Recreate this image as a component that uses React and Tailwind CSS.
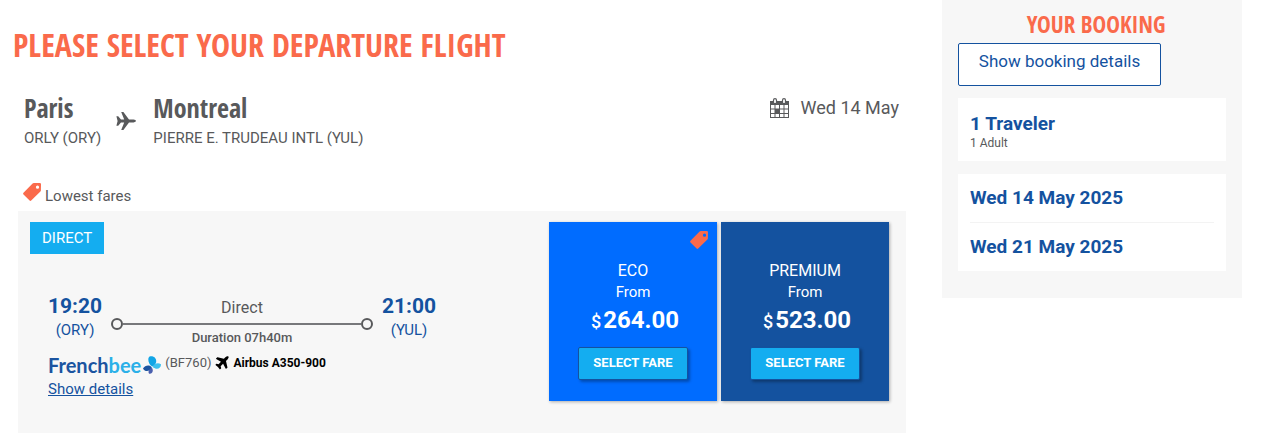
const headingFont = { fontFamily: "'Open Sans Condensed', 'Roboto Condensed', Roboto, sans-serif" };

const fares = [
  { id: "eco", name: "ECO", price: "264.00", lowest: true },
  { id: "premium", name: "PREMIUM", price: "523.00", lowest: false },
];

const bookingDates = ["Wed 14 May 2025", "Wed 21 May 2025"];

function TagIcon({ className }) {
  return (
    <svg viewBox="0 0 18 18" className={className} aria-hidden="true">
      <path
        fill="#fa6a4b"
        fillRule="evenodd"
        d="M9.6 0.6Q10.1 0.1 10.8 0.1L16.8 0Q18 0 18 1.2L17.9 7.2Q17.9 8 17.4 8.5L8.2 17.5Q7.4 18.3 6.6 17.5L0.5 11.4Q-0.3 10.6 0.5 9.8ZM14.5 2.6a1.6 1.6 0 1 0 0 3.2a1.6 1.6 0 1 0 0-3.2Z"
      />
    </svg>
  );
}

function RoutePlaneIcon() {
  return (
    <svg viewBox="0 0 20 18" className="w-5 h-[18px]" aria-hidden="true">
      <path
        fill="#58595b"
        d="M0.4 4.2H2.2L5 7.6H8.2L5.2 0H7.4L13 7.6H17.6Q20 8 20 9T17.6 10.4H13L7.4 18H5.2L8.2 10.4H5L2.2 13.8H0.4L1.6 9Z"
      />
    </svg>
  );
}

function AircraftIcon() {
  return (
    <svg viewBox="150 120 1480 1480" className="w-[14px] h-[14px]" aria-hidden="true">
      <path d="M1568 160q44 52 12 148t-108 172l-161 161 160 696q5 19-12 33l-128 96q-7 6-19 6-4 0-7-1-15-3-21-16l-279-508-259 259 53 194q5 17-8 31l-96 96q-9 9-23 9h-2q-15-2-24-13l-189-252-252-189q-11-7-13-23-1-13 9-25l96-97q9-9 23-9 6 0 8 1l194 53 259-259-508-279q-14-8-17-24-2-16 9-27l128-128q14-13 30-8l665 159 160-160q76-76 172-108t148 12z" />
    </svg>
  );
}

function CalendarIcon() {
  return (
    <svg viewBox="0 0 19 20" className="w-[19px] h-5" aria-hidden="true">
      <path fill="#58595b" d="M0 3h19v17H0z" />
      <path
        fill="#fff"
        d="M1 7h3.5v3.5H1zM5.5 7H9v3.5H5.5zM10 7h3.5v3.5H10zM14.5 7H18v3.5h-3.5zM1 11.5h3.5V15H1zM10 11.5h3.5V15H10zM14.5 11.5H18V15h-3.5zM1 16h3.5v3H1zM5.5 16H9v3H5.5zM10 16h3.5v3H10zM14.5 16H18v3h-3.5z"
      />
      <rect x="3.5" y="0.7" width="3" height="5" rx="1.5" fill="#fff" stroke="#58595b" strokeWidth="1.2" />
      <rect x="12.5" y="0.7" width="3" height="5" rx="1.5" fill="#fff" stroke="#58595b" strokeWidth="1.2" />
    </svg>
  );
}

function AirlineLogo() {
  return (
    <span className="flex items-center" style={{ fontFamily: "Lato, sans-serif" }}>
      <span className="text-xl leading-6 font-bold text-[#1b54a0]">
        French<span className="text-[#2bb0e8]">bee</span>
      </span>
      <svg viewBox="0 0 18 18" className="w-[18px] h-[18px] ml-[2px]" aria-hidden="true">
        <path fill="#12a5e6" d="M9.2 10.6C5.2 8 4.2 1.8 6.6 0.4C11.2-0.8 14 3 13 6.4C12.4 8.4 11 9.8 9.2 10.6Z" />
        <path fill="#3dc0ee" d="M9.6 11C11.4 7.4 14.8 6 18 8.2C18 12.8 13.6 14.2 9.6 11Z" />
        <path fill="#1b54a0" d="M8.8 11.4C6.6 8.4 2 9.2 0 12.4C2 16.2 6.8 15.8 8.8 11.4Z" />
        <path fill="#4a5fae" d="M9 11.8C5.8 13.2 4.6 16 6.2 17.8C9.4 18.2 10.8 15 9 11.8Z" />
      </svg>
    </span>
  );
}

function FareCard({ fare }) {
  return (
    <div
      className={`relative w-[168px] h-[179px] pt-[38px] flex flex-col items-center text-white shadow-[1px_1px_3px_rgba(0,0,0,0.3)] ${
        fare.lowest ? "bg-[#006cff]" : "bg-[#14529f]"
      }`}
    >
      {fare.lowest && <TagIcon className="absolute top-[9px] right-[9px] w-[18px] h-[18px]" />}
      <div className="text-base leading-[22px]">{fare.name}</div>
      <div className="text-[15px] leading-5">From</div>
      <div className="flex items-baseline gap-[2px] font-bold mt-1 pl-1">
        <span className="text-lg leading-7 font-medium">$</span>
        <span className="text-2xl leading-7">{fare.price}</span>
      </div>
      <button
        type="button"
        className="mt-[11px] w-[110px] h-[33px] rounded-[2px] border border-[#14529f] bg-[#14adf0] text-[13px] leading-4 pb-[2px] font-bold shadow-[2px_2px_3px_rgba(0,0,0,0.3)] cursor-pointer"
      >
        SELECT FARE
      </button>
    </div>
  );
}

function FlightTime({ time, airport }) {
  return (
    <div className="w-[54px] text-center text-[#14529f]">
      <div className="text-[21px] leading-6 font-bold">{time}</div>
      <div className="text-[15px] leading-6">{airport}</div>
    </div>
  );
}

function FlightPanel() {
  return (
    <section className="flex justify-between bg-[#f7f7f7] mx-[5px] pt-[11px] pl-3 pr-[17px] pb-8">
      <div>
        <span className="inline-block bg-[#14adf0] text-white text-[15px] leading-8 px-3">
          DIRECT
        </span>
        <div className="ml-[18px] mt-10">
          <div className="flex">
            <FlightTime time="19:20" airport="(ORY)" />
            <div className="w-[262px] mx-[9px] text-center text-[#58595b]">
              <div className="text-base leading-6 mt-[2px]">Direct</div>
              <div className="flex items-center -my-[2px]">
                <span className="w-3 h-3 rounded-full border-2 border-[#58595b]" />
                <span className="flex-1 h-[2px] bg-[#77787b]" />
                <span className="w-3 h-3 rounded-full border-2 border-[#58595b]" />
              </div>
              <div className="text-[13px] leading-5 font-medium">Duration 07h40m</div>
            </div>
            <FlightTime time="21:00" airport="(YUL)" />
          </div>
          <div className="flex items-start mt-[5px]">
            <AirlineLogo />
            <span className="ml-1 text-[13px] leading-5 text-[#58595b]">(BF760)</span>
            <span className="flex items-center gap-1 ml-1 text-xs leading-5 font-bold text-black">
              <AircraftIcon />
              Airbus A350-900
            </span>
          </div>
          <a href="#details" className="block text-[15px] leading-6 underline text-[#14529f]">
            Show details
          </a>
        </div>
      </div>
      <div className="flex gap-1">
        {fares.map((fare) => (
          <FareCard key={fare.id} fare={fare} />
        ))}
      </div>
    </section>
  );
}

function BookingSidebar() {
  return (
    <aside className="w-[300px] shrink-0 bg-[#f7f7f7] pt-2 px-4 pb-[27px] text-[#14529f]">
      <h2
        className="text-[23px] leading-8 font-bold text-center text-[#fa6a4b] ml-2"
        style={headingFont}
      >
        YOUR BOOKING
      </h2>
      <button
        type="button"
        className="block mt-[3px] w-[203px] h-[43px] pb-[6px] rounded-[2px] border border-[#14529f] bg-white text-[17px] cursor-pointer"
      >
        Show booking details
      </button>
      <div className="bg-white mt-3 px-3 pt-[14px] pb-[11px]">
        <div className="text-[19px] leading-6 font-bold">1 Traveler</div>
        <div className="text-xs leading-[14px] text-[#58595b]">1 Adult</div>
      </div>
      <div className="bg-white mt-[13px] px-3">
        {bookingDates.map((date) => (
          <div
            key={date}
            className="text-[19px] leading-[48px] font-bold border-b border-[#f3f3f3] last:border-b-0"
          >
            {date}
          </div>
        ))}
      </div>
    </aside>
  );
}

export default function App() {
  return (
    <div
      className="flex items-start bg-white pl-[13px] pr-[23px] gap-[31px]"
      style={{ fontFamily: "Roboto, sans-serif" }}
    >
      <main className="flex-1 text-[#58595b]">
        <h1
          className="text-[32px] leading-10 pt-[25px] font-bold text-[#fa6a4b]"
          style={headingFont}
        >
          PLEASE SELECT YOUR DEPARTURE FLIGHT
        </h1>
        <div className="flex justify-between items-start mt-[27px] pl-[11px] pr-3">
          <div className="flex">
            <div>
              <div className="text-[26px] leading-8 font-bold" style={headingFont}>
                Paris
              </div>
              <div className="text-[15px] leading-7">ORLY (ORY)</div>
            </div>
            <div className="ml-[15px] mr-[17px] mt-5">
              <RoutePlaneIcon />
            </div>
            <div>
              <div className="text-[26px] leading-8 font-bold" style={headingFont}>
                Montreal
              </div>
              <div className="text-[15px] leading-7">PIERRE E. TRUDEAU INTL (YUL)</div>
            </div>
          </div>
          <div className="flex items-center gap-3 text-lg leading-8">
            <CalendarIcon />
            Wed 14 May
          </div>
        </div>
        <div className="flex items-center gap-1 mt-[31px] mb-[2px] ml-[10px] text-[15px] leading-6">
          <TagIcon className="w-[18px] h-[18px] mb-2" />
          Lowest fares
        </div>
        <FlightPanel />
      </main>
      <BookingSidebar />
    </div>
  );
}
